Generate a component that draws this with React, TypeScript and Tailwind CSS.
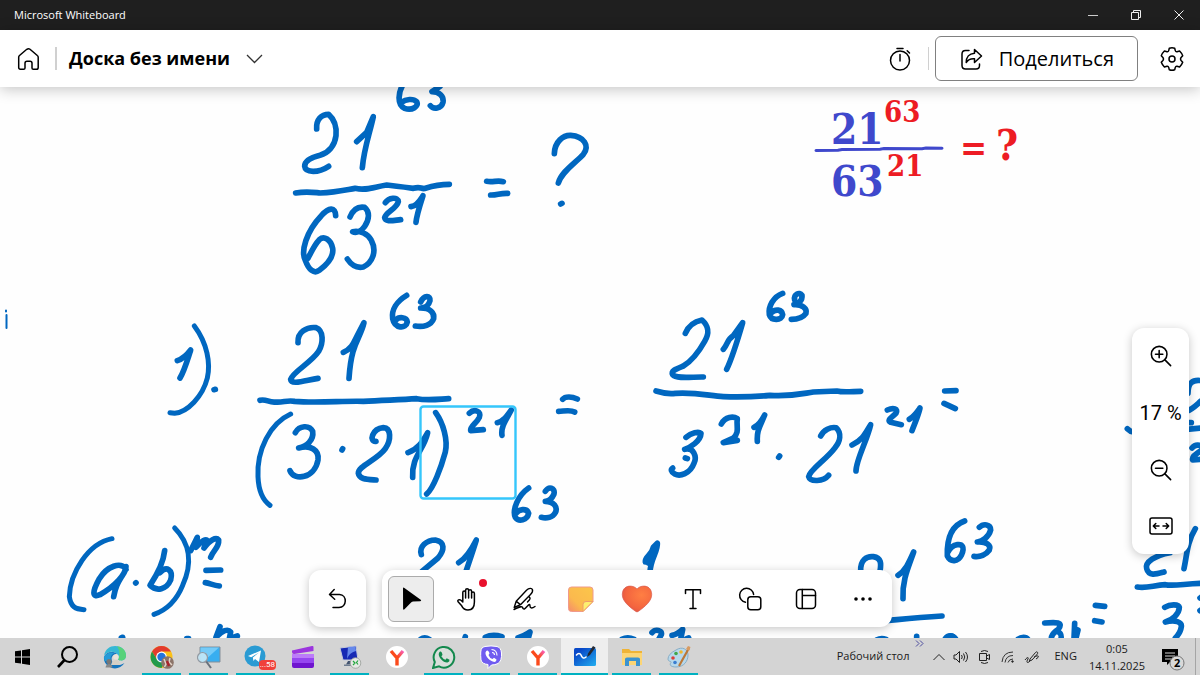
import React, { useState } from 'react';
import clsx from 'clsx';

type InkGroup = { x: number; y: number; strokes: string[] };

// Ink is stored at three times the board scale, relative to the corner of each group.
const INK: InkGroup[] = [
  {
    x: 240,
    y: 85,
    strokes: [
      'M492 -6C474 20 470 60 494 70C516 78 538 64 530 50C520 40 498 42 484 52',
      'M600 4L576 20C598 20 612 34 609 52C604 72 580 74 571 62',
      'M230 132C228 104 244 88 266 88C284 104 290 130 288 152C284 184 264 204 240 211C212 218 194 228 194 244C196 264 236 264 266 244',
      'M350 170L380 142L400 95C388 150 372 190 367 248',
      'M167 324C200 318 220 322 240 324C290 322 320 314 345 310C380 318 400 306 440 300C460 302 490 306 520 310C540 304 540 310 552 311C574 304 590 298 628 298',
      'M287 392C286 364 266 368 244 392C198 440 182 500 196 526C206 554 222 568 238 556C262 538 282 516 278 490C272 462 252 452 238 464C224 478 214 500 204 520',
      'M330 396C340 372 356 364 374 367C390 380 388 404 374 424C364 438 350 446 338 440C360 436 384 446 394 466C412 500 396 534 370 546C350 550 334 540 322 522',
      'M436 353C446 338 474 334 475 350C470 372 438 380 434 398C436 412 460 406 482 404',
      'M513 365C532 362 540 346 549 332C540 360 530 390 528 412',
      'M740 289C760 293 770 285 790 290M752 330C770 331 780 324 803 325',
      'M943 206C944 170 970 150 992 151C1032 154 1050 182 1030 208C1008 232 964 260 955 294',
      'M962 357L966 355',
    ],
  },
  {
    x: 150,
    y: 280,
    strokes: [
      'M82 242C100 236 110 226 122 210C112 240 104 270 90 294',
      'M192 329L196 328',
      'M444 188C442 156 470 140 498 143C522 152 520 190 506 214C484 248 430 274 422 298C424 316 462 302 504 295',
      'M580 217C606 206 612 186 620 170L642 128C630 180 604 186 597 295',
      'M770 46C740 64 724 90 728 116C734 146 768 148 772 126C770 110 746 110 738 120',
      'M812 66C822 44 842 46 840 62C836 78 824 84 812 84C840 84 854 98 851 116C844 136 820 142 796 138',
      'M330 361C348 356 356 368 376 366C400 368 410 360 434 364C500 370 580 362 640 364C700 360 750 360 800 356C830 362 860 358 896 356',
      'M436 458C448 436 478 434 488 454C492 480 470 500 446 504C482 494 508 510 504 540C494 596 432 604 420 572',
      'M576 510L578 506',
      'M678 484C656 486 666 446 700 443C724 444 724 480 706 506C682 540 624 558 625 580C628 598 650 598 678 600',
      'M774 518C808 506 820 480 833 458C822 510 784 530 788 592',
      'M857 398C880 430 894 480 886 516C874 560 850 626 830 642',
      'M958 400C972 386 996 392 988 412C980 430 960 438 962 452L1000 449',
      'M1042 428C1060 424 1070 410 1084 390C1068 420 1052 440 1056 466',
      'M1136 624C1104 646 1086 690 1096 712C1106 726 1132 722 1136 700C1130 682 1106 688 1098 700',
      'M1186 634C1196 618 1216 622 1212 642C1204 660 1196 664 1186 664C1212 664 1224 682 1216 698C1208 712 1190 716 1174 712',
    ],
  },
  {
    x: 550,
    y: 280,
    strokes: [
      'M38 358C46 348 66 350 82 357M26 394C40 394 60 388 74 396',
      'M406 160C416 136 436 124 456 120C478 140 478 160 464 184C446 216 420 246 400 258C380 266 362 272 368 284C380 298 430 290 460 291',
      'M520 208C534 192 530 180 550 167L578 128C560 190 548 230 530 268',
      'M698 40C670 50 654 80 658 104C664 124 696 122 698 104C696 88 676 86 664 98',
      'M734 60C730 44 748 34 756 46C758 62 744 72 732 74C756 72 772 86 768 100C758 114 740 118 724 118',
      'M318 333C340 340 360 342 376 340C440 336 480 348 520 350C580 352 620 350 660 346C720 350 750 342 790 336L860 333C880 338 910 334 932 334',
      'M408 472C424 458 446 454 453 460C452 484 420 502 404 508C430 500 442 530 432 550C420 582 390 590 374 582C362 574 362 568 368 564',
      'M406 534L412 536',
      'M514 432C526 410 550 408 562 416C558 440 570 456 550 474L520 488L562 481',
      'M612 442C630 434 636 420 644 405C630 440 620 450 622 484',
      'M686 532L689 528',
      'M812 468C820 450 842 440 858 443C876 460 870 484 856 502C828 540 780 568 776 590C780 606 820 606 836 586',
      'M906 495C938 480 946 460 962 434C952 480 918 540 918 573',
      'M1012 390C1030 382 1046 386 1038 400C1024 414 1010 420 1022 427L1054 434',
      'M1078 418C1092 410 1100 398 1110 384C1104 410 1094 430 1086 452',
      'M1184 333L1218 332M1182 370L1216 386',
    ],
  },
  {
    x: 940,
    y: 310,
    strokes: [
      'M74 633C36 646 20 680 22 738C32 758 54 756 64 736C76 710 66 702 52 704C38 706 30 714 24 726',
      'M118 652C130 640 152 642 152 660C146 682 126 694 112 696C140 694 154 706 148 720C138 734 120 742 102 739',
      'M562 356C568 362 572 365 580 366',
      'M744 250C744 220 756 208 784 212M740 304C760 296 770 284 784 272',
      'M740 338L754 338M740 358L784 354',
      'M756 414C766 402 780 404 786 410M786 420C760 436 756 442 758 450L784 448',
      'M690 728C646 736 614 756 620 776C626 800 650 792 672 786',
      'M766 656C740 700 742 730 732 776',
      'M592 831C620 836 640 826 676 824C700 830 740 820 790 820',
      'M674 892C690 882 716 882 718 892C718 912 696 930 676 936C706 928 726 936 724 950C722 966 716 974 706 984',
      'M780 864L786 860M780 902L786 898',
      'M466 886L494 889M464 932L486 936',
      'M314 939C350 936 370 936 356 956C346 966 334 970 334 986M352 964C364 970 366 976 362 990',
      'M404 940L402 986M414 960L408 984',
      'M18 990C26 974 40 974 48 990M234 988C244 980 258 980 264 988',
    ],
  },
  {
    x: 0,
    y: 500,
    strokes: [
      'M378 208C364 182 320 200 298 236C276 276 276 294 300 284C346 258 376 224 378 200M370 222C352 250 346 262 341 290',
      'M407 249L408 248',
      'M494 152C490 190 474 220 450 256C470 276 500 268 512 240C520 210 500 196 480 218',
      'M572 152L592 112L588 142C604 122 618 116 622 122L612 144C630 120 648 110 656 120C658 142 640 150 632 172',
      'M618 211L662 210M616 248C630 250 640 256 658 258',
      'M660 380L648 412C668 390 684 386 692 396L688 416L712 408',
      'M364 413L368 412M560 416L566 416',
    ],
  },
  {
    x: 370,
    y: 500,
    strokes: [
      'M154 164C146 140 170 120 196 120C226 126 224 150 204 174L156 214',
      'M266 188C290 174 304 150 319 120C310 150 296 190 288 214',
      'M826 186C824 170 846 166 850 142L862 130C864 154 842 176 840 216M834 188L850 160',
      'M152 418C160 412 168 412 178 418M286 410L284 418M346 412C366 402 382 406 396 410',
      'M444 413C460 410 470 402 480 396L474 418M756 418C770 410 780 412 792 418',
      'M846 398C856 386 878 390 874 404L866 418M906 406C920 404 930 396 938 388L932 418M950 416L956 414',
    ],
  },
  {
    x: 700,
    y: 500,
    strokes: [
      'M482 214C480 180 500 168 520 170C544 174 544 190 540 214',
      'M594 226C616 212 626 190 641 156C626 200 606 240 609 296',
      'M560 362C620 356 650 352 726 348',
      'M530 420C540 414 548 414 558 418M650 409L650 418M736 416C744 404 758 404 768 418',
    ],
  },
];

const BRACKETS: InkGroup[] = [
  {
    x: 150,
    y: 280,
    strokes: [
      'M133 138C172 190 182 250 172 294C158 350 112 396 74 400L60 398',
      'M422 402C360 430 320 510 324 590C326 640 340 662 360 676',
    ],
  },
  {
    x: 0,
    y: 500,
    strokes: ['M336 116C264 130 210 220 208 290C212 320 226 328 252 329', 'M524 84C570 130 578 190 548 256C530 300 500 330 462 343'],
  },
];

const renderInk = (groups: InkGroup[], width: number) =>
  groups.map((group, i) => (
    <g key={i} transform={`translate(${group.x} ${group.y}) scale(0.33333)`} strokeWidth={width}>
      {group.strokes.map((d) => (
        <path key={d} d={d} />
      ))}
    </g>
  ));

const Board = () => (
  <svg className="absolute top-0 left-0" width="1200" height="551" viewBox="0 87 1200 551" role="img" aria-label="Доска">
    <g fill="none" stroke="#0067c0" strokeLinecap="round" strokeLinejoin="round">
      {renderInk(INK, 17)}
      {renderInk(BRACKETS, 15)}
      <path d="M6.500 315v13M6 310.500v1" strokeWidth="2" />
    </g>
    <rect x="420.500" y="406.500" width="95" height="92" rx="3" fill="none" stroke="#35c6fb" strokeWidth="2.400" />
    <path d="M816 150.500L838 150.300L842 149.500L880 149.300L884 148.600L922 148.800L926 148L942 148.200" stroke="#3f48cc" strokeWidth="3" strokeLinecap="round" fill="none" />
    <g className="font-['DejaVu_Serif_Condensed','DejaVu_Serif',serif] font-bold">
      <text x="831" y="144" fontSize="42" fill="#3f48cc">21</text>
      <text x="884" y="122" fontSize="29" fill="#ed1c24">63</text>
      <text x="831" y="196" fontSize="42" fill="#3f48cc">63</text>
      <text x="887" y="176" fontSize="29" fill="#ed1c24">21</text>
      <text x="960" y="160" fontSize="36" fill="#ed1c24">=</text>
      <text x="996" y="160" fontSize="42" fill="#ed1c24">?</text>
    </g>
  </svg>
);

const Line = ({ size = 24, width = 1.3, children }: { size?: number; width?: number; children: React.ReactNode }) => (
  <svg width={size} height={size} viewBox="0 0 24 24" fill="none" stroke="currentColor" strokeWidth={width} strokeLinecap="round" strokeLinejoin="round" aria-hidden="true">
    {children}
  </svg>
);

const TitleBar = () => (
  <div className="flex h-[30px] shrink-0 items-center bg-[#1f1f1f] pl-3.5 text-white">
    <span className="text-[11px]">Microsoft Whiteboard</span>
    <div className="ml-auto flex h-full">
      <button aria-label="Свернуть" className="flex w-[43px] items-center justify-center">
        <svg width="10" height="10" viewBox="0 0 10 10" stroke="#ccc"><path d="M0 5.500H10" /></svg>
      </button>
      <button aria-label="Восстановить" className="flex w-[43px] items-center justify-center">
        <svg width="10" height="10" viewBox="0 0 10 10" stroke="#eee" fill="none"><path d="M.5 2.500H7.500V9.500H.5ZM2.500 2V.5H9.500V7.500H8" /></svg>
      </button>
      <button aria-label="Закрыть" className="flex w-[43px] items-center justify-center">
        <svg width="10" height="10" viewBox="0 0 10 10" stroke="#eee"><path d="M.5 .5L9.500 9.500M9.500 .5L.5 9.500" /></svg>
      </button>
    </div>
  </div>
);

const Header = () => (
  <header className="relative z-10 flex h-[57px] shrink-0 items-center bg-white pr-4 pl-4 shadow-[0_2px_14px_rgba(0,0,0,0.24)]">
    <button aria-label="Домой">
      <Line width={1.5}>
        <path d="M2.700 10.200Q2.700 9.200 3.500 8.500L10.800 2.300Q12.500 1 14 2.300L21.300 8.500Q22.200 9.200 22.200 10.200V20.500Q22.200 22.300 20.500 22.300H17.300Q16 22.300 16 21V16.200Q16 14.200 14 14.200H11Q9 14.200 9 16.200V21Q9 22.300 7.600 22.300H4.400Q2.700 22.300 2.700 20.500Z" />
      </Line>
    </button>
    <div className="ml-[15px] h-[23px] w-0.5 bg-[#d0d0d0]" />
    <button className="ml-3 flex items-center gap-4">
      <span className="text-[18px] font-bold text-black">Доска без имени</span>
      <svg width="17" height="10" viewBox="0 0 17 10" fill="none" stroke="#333" strokeWidth="1.300"><path d="M1 1L8.500 8.500L16 1" /></svg>
    </button>
    <div className="ml-auto flex items-center">
      <button aria-label="Таймер">
        <Line width={1.5}>
          <circle cx="12" cy="13.500" r="9.500" />
          <path d="M12 7.500V14M9 1.500H15M19.200 3.800L21.500 6" />
        </Line>
      </button>
      <div className="ml-4 h-[23px] w-px bg-[#d0d0d0]" />
      <button className="ml-1.5 flex h-[45px] items-center gap-4 rounded-md border border-[#808080] px-[23px] text-[20px]">
        <Line width={1.5}>
          <path d="M10 3.500H6.500Q3 3.500 3 7V18.500Q3 22 6.500 22H17Q20.500 22 20.500 18.500V17" />
          <path d="M15.500 2.500L22.500 9L15.500 15.500V11.800C12 11.500 9 12.800 7.200 15.500C7.200 10.500 10 6.500 15.500 6.200Z" />
        </Line>
        <span>Поделиться</span>
      </button>
      <button aria-label="Параметры" className="ml-[22px]">
        <Line width={1.5}>
          <path d="M9.300 1.300Q12 .3 14.700 1.300L15.300 3.600Q15.700 4.900 17 4.700L19.600 4Q21.700 6 22.700 8.700L21.100 10.500Q20 12 21.100 13.500L22.700 15.300Q21.700 18 19.600 20L17 19.300Q15.700 19.100 15.300 20.400L14.700 22.700Q12 23.700 9.300 22.700L8.700 20.400Q8.300 19.100 7 19.300L4.400 20Q2.300 18 1.300 15.300L2.900 13.500Q4 12 2.900 10.500L1.300 8.700Q2.300 6 4.400 4L7 4.700Q8.300 4.900 8.700 3.600Z" />
          <circle cx="12" cy="12" r="3" />
        </Line>
      </button>
    </div>
  </header>
);

const ZoomPanel = () => (
  <div className="absolute right-[11px] bottom-[84px] flex w-[57px] flex-col rounded-xl bg-white shadow-[0_2px_10px_rgba(0,0,0,0.22)]">
    <button aria-label="Увеличить" className="flex h-14 items-center justify-center">
      <Line size={22} width={1.7}>
        <circle cx="10" cy="10" r="8.500" />
        <path d="M16 16L22.500 22.500M10 6V14M6 10H14" />
      </Line>
    </button>
    <button className="h-[57px] font-[Roboto,sans-serif] text-[20px] whitespace-nowrap">17 %</button>
    <button aria-label="Уменьшить" className="flex h-[57px] items-center justify-center">
      <Line size={22} width={1.7}>
        <circle cx="10" cy="10" r="8.500" />
        <path d="M16 16L22.500 22.500M6 10H14" />
      </Line>
    </button>
    <button aria-label="По размеру экрана" className="flex h-14 items-center justify-center">
      <Line width={1.5}>
        <rect x="1" y="4" width="22" height="16" rx="2" />
        <path d="M4.500 12H10M14 12H19.500M6.800 9.500L4.300 12L6.800 14.500M17.200 9.500L19.700 12L17.200 14.500" />
      </Line>
    </button>
  </div>
);

const TOOLS = [
  {
    id: 'select',
    label: 'Выбрать',
    icon: (
      <svg width="24" height="26" viewBox="0 0 24 26"><path d="M4 2.600Q4 1 5.400 2L21.700 13.700Q23 15 21.200 15.200L14 15.600Q12.600 15.800 11.600 16.900L5.500 23.300Q4.200 24.500 4.100 22.800Z" /></svg>
    ),
  },
  {
    id: 'pan',
    label: 'Панорама',
    icon: (
      <Line width={1.5}>
        <path d="M7.800 14.500V5.500Q7.800 4 9.200 4T10.600 5.500V11M10.600 11V3.200Q10.600 1.700 12.100 1.700T13.600 3.200V11M13.600 4Q13.600 2.700 15.100 2.700T16.600 4.200V11M16.600 6.500Q16.600 5 18 5T19.400 6.500V15C19.400 20 17.500 23 13 23C9.500 23 8 21.500 6.700 18.800L3.300 15Q2.200 13.600 3.500 12.900Q5 12.400 6 13.300L7.800 15" />
      </Line>
    ),
  },
  {
    id: 'ink',
    label: 'Рукописный ввод',
    icon: (
      <Line width={1.4}>
        <path d="M4.200 14.200L14.500 3.200C17 .8 19.800 .9 20.400 2.500C21 4 20 6 18.500 7.500L8.500 17.700L2.200 20.500ZM4.300 14.400L8.400 17.600M16.500 9.700Q19 10.700 17.500 12.700L15.500 15M2 22.500C8 19.500 9.500 19 10.500 20.200C11.500 23.500 13 22 15 19.500C17.500 17 18 17 18 19C18 21 19.500 22 23 19.500" />
      </Line>
    ),
  },
  {
    id: 'note',
    label: 'Заметка',
    icon: (
      <svg width="28" height="28" viewBox="0 0 28 28">
        <defs>
          <linearGradient id="noteFill" x1="1" y1="0" x2="0" y2="1">
            <stop offset="0" stopColor="#fbc64a" />
            <stop offset=".65" stopColor="#fbb94e" />
            <stop offset="1" stopColor="#f58a6c" />
          </linearGradient>
        </defs>
        <path d="M5.500 2H24Q27 2 27 5V16.500L17 26.500H5.500Q2.500 26.500 2.500 23.500V5Q2.500 2 5.500 2Z" fill="url(#noteFill)" stroke="#f09a8c" />
        <path d="M27 16.500L17 26.500V19.500Q17 16.500 20 16.500Z" fill="#fdf06f" stroke="#ee9c6a" />
      </svg>
    ),
  },
  {
    id: 'reaction',
    label: 'Реакции',
    icon: (
      <svg width="32" height="28" viewBox="0 0 32 28">
        <defs>
          <radialGradient id="heartFill" cx=".65" cy=".35" r=".75">
            <stop offset="0" stopColor="#ff7f43" />
            <stop offset=".7" stopColor="#f3643f" />
            <stop offset="1" stopColor="#de5145" />
          </radialGradient>
        </defs>
        <path d="M16 4C12-.5 1.500-.5 1.300 9.500C1.200 16 8 21.500 14.500 26.300Q16 27.500 17.500 26.300C24 21.500 30.800 16 30.700 9.500C30.500-.5 20-.5 16 4Z" fill="url(#heartFill)" stroke="#d95c50" strokeWidth=".7" />
      </svg>
    ),
  },
  {
    id: 'text',
    label: 'Текст',
    icon: (
      <Line width={1.5}>
        <path d="M4.500 6.500V2.700H19.500V6.500M12 2.700V21.500M9 21.500H15" />
      </Line>
    ),
  },
  {
    id: 'shapes',
    label: 'Фигуры',
    icon: (
      <Line width={1.5}>
        <path d="M7.500 15.200A7 7 0 1 1 15.600 7.500" />
        <rect x="9.800" y="9.800" width="13" height="13" rx="3" />
      </Line>
    ),
  },
  {
    id: 'templates',
    label: 'Шаблоны',
    icon: (
      <Line width={1.5}>
        <rect x="2.500" y="2.500" width="19" height="19" rx="3.500" />
        <path d="M8.300 2.500V21.500M8.300 8.500H21.500" />
      </Line>
    ),
  },
  {
    id: 'more',
    label: 'Ещё',
    icon: (
      <svg width="20" height="4" viewBox="0 0 20 4"><circle cx="3" cy="2" r="1.800" /><circle cx="10" cy="2" r="1.800" /><circle cx="17" cy="2" r="1.800" /></svg>
    ),
  },
];

const Toolbar = () => {
  const [tool, setTool] = useState('select');
  return (
    <div className="absolute inset-x-0 bottom-[11px] flex justify-center gap-4">
      <button aria-label="Отменить" className="flex size-[57px] items-center justify-center rounded-xl bg-white shadow-[0_2px_10px_rgba(0,0,0,0.22)]">
        <svg width="22" height="22" viewBox="0 0 22 22" fill="none" stroke="black" strokeWidth="1.500" strokeLinecap="round" strokeLinejoin="round">
          <path d="M8.200 1.500L3.500 6.500L8.700 11.200M3.700 6.400H13.500C21.500 6.800 21 19.500 13 19.500H7" />
        </svg>
      </button>
      <div className="flex w-[510px] items-center justify-between rounded-xl bg-white px-1.5 shadow-[0_2px_10px_rgba(0,0,0,0.22)]">
        {TOOLS.map((item) => (
          <button
            key={item.id}
            aria-label={item.label}
            onClick={() => setTool(item.id)}
            className={clsx(
              'relative flex size-[46px] items-center justify-center rounded-md border',
              tool === item.id ? 'border-[#ababab] bg-[#ededed]' : 'border-transparent'
            )}
          >
            {item.icon}
            {item.id === 'pan' && <span className="absolute top-[2px] right-[2px] size-2 rounded-full bg-[#e8112d]" />}
          </button>
        ))}
      </div>
    </div>
  );
};

const Yandex = () => (
  <>
    <defs>
      <linearGradient id="yaFill" gradientUnits="userSpaceOnUse" x1="6" y1="18" x2="19" y2="5">
        <stop offset=".5" stopColor="#fb4a1c" />
        <stop offset="1" stopColor="#f765d8" />
      </linearGradient>
    </defs>
    <circle cx="12" cy="12" r="11" fill="#fff" />
    <path d="M6 6L12 13L18 6M12 12V20.500" fill="none" stroke="url(#yaFill)" strokeWidth="3.400" />
  </>
);

const APPS = [
  {
    label: 'Поиск',
    icon: <g fill="none" stroke="#000" strokeWidth="2"><circle cx="13.500" cy="9.500" r="7.500" /><path d="M8.500 15L2 22" strokeWidth="2.600" /></g>,
  },
  {
    label: 'Microsoft Edge',
    icon: (
      <>
        <path d="M1 11C2 4 7 1 12 1C19 1 23.500 6 23 11.500C22.500 16 17 16 15 14.500C17 9 11 6 7 7C4 8 1.500 9 1 11Z" fill="#35b7d5" />
        <path d="M14 1.200C20 2 23.500 6.500 23 11.500C22.500 16 17 16 15 14.500C17 11 17 5 14 1.200Z" fill="#58d27a" />
        <path d="M1 12C3 7 10 5.500 14 9C9 9 7 14 10 18C13 21 18 20.500 21.500 18C18 23.500 11 25 6 21.500C2 19 .5 15 1 12Z" fill="#1474bd" />
        <path d="M1 12C3 8 8 6.500 12 8C8 9 7 13 8 16L1.500 16Z" fill="#249bd8" />
        <circle cx="13" cy="12" r="2.800" fill="#e9e3da" />
        <path d="M8 20Q9 15 13 15T17 20Z" fill="#d5cfc5" />
        <circle cx="6" cy="16.500" r="2.600" fill="#777" />
        <path d="M2.500 22.500Q3 19 6 19T9.500 22.500Z" fill="#888" />
      </>
    ),
  },
  {
    label: 'Google Chrome',
    running: true,
    icon: (
      <>
        <circle cx="11.500" cy="12" r="11" fill="#fbc116" />
        <path d="M2 6.500A11 11 0 0 1 21 6.500H11.500L7 14.500Z" fill="#e33b2e" />
        <path d="M2 6.500A11 11 0 0 0 11.500 23L16 15L7 14.500Z" fill="#229a4b" />
        <circle cx="11.500" cy="12" r="5.400" fill="#fff" />
        <circle cx="11.500" cy="12" r="4.200" fill="#2473dc" />
        <circle cx="17.500" cy="17.500" r="6.300" fill="#8c7469" />
        <path d="M14 14L16 19L14.500 22M20 13L19 17L22 20" stroke="#e2d3c7" strokeWidth="1.500" fill="none" />
        <path d="M17 16L19 21" stroke="#a9242c" strokeWidth="2.500" />
      </>
    ),
  },
  {
    label: 'Экранная лупа',
    running: true,
    icon: (
      <>
        <path d="M3 2H23V17H3Z" fill="#38aef0" stroke="#858f99" />
        <path d="M3.500 2.500H22L7 16H3.500Z" fill="#75cbf8" />
        <path d="M8.500 15.500L14 23" stroke="#68717b" strokeWidth="2" />
        <circle cx="5.500" cy="12.500" r="5" fill="#c2e7f6" fillOpacity=".9" stroke="#939aa2" strokeWidth="1.200" />
      </>
    ),
  },
  {
    label: 'Telegram',
    running: true,
    badge: '...58',
    icon: <><circle cx="11" cy="11" r="10.500" fill="#2a9bd3" /><path d="M4 11L17 5.500L15 17L11 14L9.500 16L8.800 12.500L15 7.500L7.200 12.200Z" fill="#fff" /></>,
  },
  {
    label: 'Clipchamp',
    icon: (
      <>
        <path d="M1 5.500L21 1Q22.500 .6 22.500 2.200V6L3 9Q1 9 1 7Z" fill="#9b35de" />
        <path d="M1 9H23V13H1Z" fill="#bc7bfa" />
        <path d="M1 13H23V18H1Z" fill="#9646f0" />
        <path d="M1 18H23V21Q23 23 21 23H3Q1 23 1 21Z" fill="#6f15cf" />
      </>
    ),
  },
  {
    label: 'Удалённый рабочий стол',
    running: true,
    icon: (
      <>
        <path d="M2 3L18 1L20 15L5 15Z" fill="#1629b4" stroke="#c5cada" />
        <path d="M10 2L17.500 1.500L18 6C14 7 11 9 9 14Z" fill="#6588eb" />
        <path d="M10 16L16 16L17 19L8 19.500Z" fill="#41526e" />
        <path d="M6 19.500H15V21H6Z" fill="#6e7d91" />
        <circle cx="17.500" cy="18" r="5.300" fill="#e6e8e5" stroke="#989d98" strokeWidth=".8" />
        <path d="M15 16L17 18L15 20M20 15.500L18.500 17.500L20 19.500" fill="none" stroke="#22a63c" strokeWidth="1.200" />
      </>
    ),
  },
  { label: 'Яндекс', icon: <Yandex /> },
  {
    label: 'WhatsApp',
    running: true,
    icon: (
      <>
        <path d="M1 23L2.800 17A10.300 10.300 0 1 1 7 21.300Z" fill="#d9dfdb" stroke="#13894d" strokeWidth="2" />
        <path d="M8 6.500Q9.500 6 10 8L10.500 10L9.300 11.200Q11 14 13.500 14.700L14.700 13.300L17.500 14.700Q17.800 17 15.500 17.500C11.500 18 6.500 12.500 6.700 9Q7 7 8 6.500Z" fill="#13894d" />
      </>
    ),
  },
  {
    label: 'Viber',
    running: true,
    icon: (
      <>
        <path d="M6 1.500Q12 .3 18 1.500Q22 2.500 22.500 8Q23 16 19 18.500Q16 20 12.500 20L9 23.500V19.500Q3 19 2 15Q1 5 3 3Q4 2 6 1.500Z" fill="#705cf0" stroke="#fff" />
        <path d="M8 5.500Q9 5 10 7L10.500 8.500L9.500 10Q10.500 13 13.500 14L15 12.800L17.500 14.500Q17.500 16.500 15.500 17C11 16.500 6 11 6.500 7.500Q7 6 8 5.500Z" fill="#fff" />
        <path d="M12.500 4.500Q18 5 18 10.500M13 7.500Q15.500 7.500 15.500 10" fill="none" stroke="#fff" strokeWidth="1.100" />
      </>
    ),
  },
  { label: 'Яндекс Браузер', running: true, icon: <Yandex /> },
  {
    label: 'Microsoft Whiteboard',
    running: true,
    active: true,
    icon: (
      <>
        <defs>
          <linearGradient id="wbFill" x1="0" y1="0" x2="1" y2="1">
            <stop offset=".2" stopColor="#0848c8" />
            <stop offset="1" stopColor="#23aff0" />
          </linearGradient>
        </defs>
        <rect x="1" y="3" width="22" height="18" rx="1.500" fill="url(#wbFill)" />
        <path d="M3.500 10C5 8 7 8 8 10C9 13 10.500 14 13 12" fill="none" stroke="#fff" strokeWidth="1.600" strokeLinecap="round" />
        <path d="M14 12L15 8.500L20 1L22.500 2.500L17 10Z" fill="#242a35" />
      </>
    ),
  },
  {
    label: 'Проводник',
    running: true,
    icon: (
      <>
        <path d="M2 4H9L11 6H22V20H2Z" fill="#efb437" />
        <path d="M2 8H22V20H2Z" fill="#fcd575" />
        <path d="M5 14Q5 12.500 7 12.500H18Q20 12.500 20 14V21H16V16H9V21H5Z" fill="#3c93d0" />
      </>
    ),
  },
  {
    label: 'Paint',
    running: true,
    icon: (
      <>
        <path d="M9 5C15 1 21 4 21 10C21 16 17 22 9 22C4 22 2 20 4 17.500C5 16 1 17 1 14Q1 9 9 5Z" fill="#b7d8eb" stroke="#89aec6" />
        <circle cx="6" cy="13" r="1.800" fill="#dc3d3a" />
        <circle cx="9" cy="8.500" r="1.800" fill="#41a64b" />
        <circle cx="14" cy="7" r="1.800" fill="#f0b72d" />
        <circle cx="8" cy="17.500" r="1.800" fill="#397dd0" />
        <path d="M22 3L12 21" stroke="#bc7837" strokeWidth="2.200" />
        <path d="M19 4L21 1L23.500 2L22 6Z" fill="#d89b61" />
      </>
    ),
  },
];

const Taskbar = () => (
  <footer className="relative z-10 flex h-[37px] shrink-0 items-center bg-[#d4d4d4] text-[11px] text-[#1a1a1a]">
    <button aria-label="Пуск" className="flex h-full w-11 items-center justify-center">
      <svg width="15" height="16" viewBox="0 0 15 16"><path d="M0 2.300L6 1.500V7.500H0ZM7 1.300L15 0V7.500H7ZM0 8.500H6V14.500L0 13.700ZM7 8.500H15V16L7 14.700Z" /></svg>
    </button>
    {APPS.map((app) => (
      <button key={app.label} aria-label={app.label} className={clsx('relative flex h-full w-[47px] items-center justify-center', app.active && 'bg-[#eeeeee]')}>
        <svg width="24" height="24" viewBox="0 0 24 24">{app.icon}</svg>
        {app.badge && (
          <span className="absolute right-[3px] bottom-[5px] rounded-sm bg-[#f0403a] px-px font-[Roboto,sans-serif] text-[8px] leading-[10px] text-white">{app.badge}</span>
        )}
        {app.running && <span className={clsx('absolute bottom-0 h-[2px] bg-[#00b1c1]', app.active ? 'inset-x-0' : 'inset-x-1')} />}
      </button>
    ))}
    <div className="ml-auto flex h-full items-center">
      <span>Рабочий стол</span>
      <button aria-label="Показать ещё" className="ml-1.5 self-start pt-[2px]">
        <svg width="10" height="7" viewBox="0 0 10 7" fill="none" stroke="#4a4a9c"><path d="M1 .5L4 3.500L1 6.500M5 .5L8 3.500L5 6.500" /></svg>
      </button>
      <button aria-label="Скрытые значки" className="ml-2">
        <svg width="12" height="8" viewBox="0 0 12 8" fill="none" stroke="#222"><path d="M.5 7L6 1.500L11.500 7" /></svg>
      </button>
      <div className="ml-2 flex items-center gap-[9px]">
        <svg width="16" height="14" viewBox="0 0 16 14" fill="none" stroke="#222"><path d="M1 5H3L6.500 1.500V12.500L3 9H1ZM8.500 5Q10 7 8.500 9M10.500 3.500Q13 7 10.500 10.500M12.500 2Q16.500 7 12.500 12" /></svg>
        <svg width="14" height="16" viewBox="0 0 14 16" fill="none" stroke="#222"><path d="M3 2.500Q6.500 .5 10 2.500M3 13.500Q6.500 15.500 10 13.500M1.500 4.500H8.500V11.500H1.500ZM8.500 7L11.500 5.500V10.500L8.500 9" /></svg>
        <svg width="14" height="14" viewBox="0 0 14 14" fill="none" stroke="#333"><path d="M1 12Q2 2 12 2M4 12.500Q5 5.500 12 5.500M7 12.500Q8 9 12 9" /><circle cx="11.500" cy="11.500" r=".8" fill="#222" /></svg>
        <svg width="16" height="14" viewBox="0 0 16 14" fill="none" stroke="#222"><path d="M6 9L11.500 2.500Q13 1 13.700 2.500Q14 3.500 12.500 5L8 10L5.500 11ZM1 10C3 7 5 7 4 9C2 12 3 14 6 11M10 7C13 5.500 15.500 5.500 14 7.500L12 9" /></svg>
      </div>
      <span className="ml-3.5">ENG</span>
      <div className="ml-3 text-center leading-[17px]">
        <div>0:05</div>
        <div>14.11.2025</div>
      </div>
      <button aria-label="Уведомления: 2" className="relative ml-4 h-full w-[34px] pt-1">
        <svg width="24" height="24" viewBox="0 0 24 24">
          <path d="M1 2H17V15H9L6 18V15H1Z" />
          <path d="M4 6H14M4 9H14M4 12H10" stroke="#d4d4d4" />
          <circle cx="16" cy="16" r="7" fill="#d9d9d9" stroke="#777" />
          <text x="13" y="20" className="font-bold" fontSize="11">2</text>
        </svg>
      </button>
      <span className="h-full w-[5px] border-l border-[#a5a5a5]" />
    </div>
  </footer>
);

export default function App() {
  return (
    <div className="flex h-screen flex-col overflow-hidden bg-[#fefefe] font-['Open_Sans','Noto_Sans',sans-serif] text-black">
      <TitleBar />
      <Header />
      <main className="relative min-h-0 flex-1 overflow-hidden">
        <Board />
        <ZoomPanel />
        <Toolbar />
      </main>
      <Taskbar />
    </div>
  );
}
